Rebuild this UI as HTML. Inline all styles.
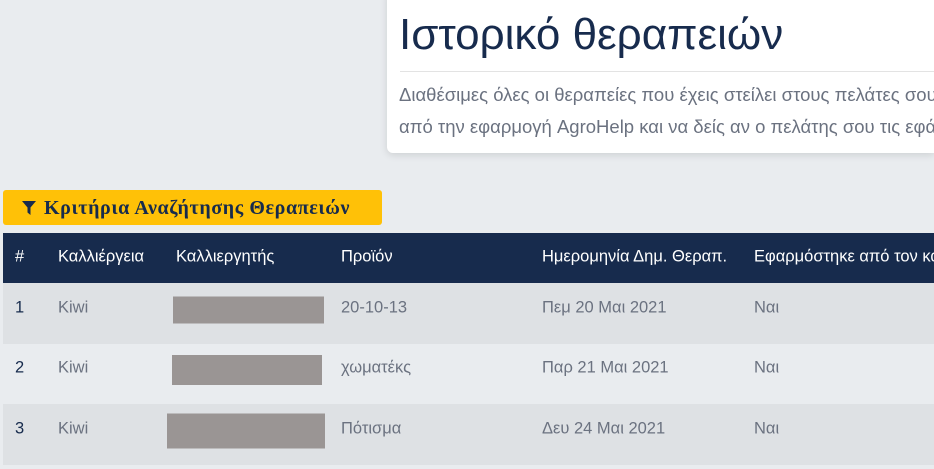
<!DOCTYPE html>
<html><head><meta charset="utf-8"><style>
body{margin:0;width:934px;height:469px;overflow:hidden;background:#e9ecef;font-family:"Liberation Sans","DejaVu Sans",sans-serif;position:relative}
.card{position:absolute;left:387px;top:-10px;width:547px;height:163px;background:#fff;border-radius:6px 0 0 6px;box-shadow:0 2px 8px rgba(0,0,0,.12);overflow:hidden}
h1{position:absolute;left:12px;top:20px;margin:0;font-weight:400;font-size:44px;color:#172b4d;white-space:nowrap}
.hr{position:absolute;left:13px;right:0;top:81px;height:1px;background:#e3e3e3}
.p{position:absolute;left:12px;top:89px;font-size:18.5px;line-height:32px;color:#6b7280;white-space:nowrap}
.btn{position:absolute;left:3px;top:190px;width:379px;height:35px;background:#ffc107;border-radius:3px;font-family:"Liberation Serif",serif;font-weight:bold;font-size:20px;letter-spacing:0.6px;color:#172b4d;line-height:37px;white-space:nowrap}
.btn svg{position:absolute;left:19px;top:11px}
.btn span{position:absolute;left:41px}
.row{position:absolute;left:3px;width:931px;font-size:16.5px;color:#6b7280;overflow:hidden}
.row div{position:absolute;white-space:nowrap}
.row div{top:calc(50% - 6px);transform:translateY(-50%)}
.h{top:233px;height:50px;background:#172b4d;color:#fff}
.h div{top:calc(50% - 1px)}
.a{background:#dee1e4}.b{background:#e9ecef}
.c0{left:12px;color:#172b4d}.h .c0{color:#fff}
.c1{left:55px}.c2{left:173px}.c3{left:338px}.c4{left:539px}.c5{left:751px}
.row .r{height:27px;background:#9a9594;top:calc(50% - 4px)}
</style></head><body>
<div class="card"><h1>Ιστορικό θεραπειών</h1><div class="hr"></div>
<div class="p">Διαθέσιμες όλες οι θεραπείες που έχεις στείλει στους πελάτες σου<br>από την εφαρμογή AgroHelp και να δείς αν ο πελάτης σου τις εφάρμοσε</div></div>
<div class="btn"><svg width="14" height="14" viewBox="0 0 14 14"><path d="M0 0H14L8.5 6.5V14L5.5 11.5V6.5Z" fill="#172b4d"/></svg><span>Κριτήρια Αναζήτησης Θεραπειών</span></div>
<div class="row h"><div class="c0">#</div><div class="c1">Καλλιέργεια</div><div class="c2">Καλλιεργητής</div><div class="c3">Προϊόν</div><div class="c4">Ημερομηνία Δημ. Θεραπ.</div><div class="c5">Εφαρμόστηκε από τον καλλιεργητή</div></div>
<div class="row a" style="top:283px;height:61px"><div class="c0">1</div><div class="c1">Kiwi</div><div class="c2 r" style="left:170px;width:151px"></div><div class="c3">20-10-13</div><div class="c4">Πεμ 20 Μαι 2021</div><div class="c5">Ναι</div></div>
<div class="row b" style="top:344px;height:60px"><div class="c0">2</div><div class="c1">Kiwi</div><div class="c2 r" style="left:169px;width:150px;height:30px"></div><div class="c3">χωματέκς</div><div class="c4">Παρ 21 Μαι 2021</div><div class="c5">Ναι</div></div>
<div class="row a" style="top:404px;height:61px"><div class="c0">3</div><div class="c1">Kiwi</div><div class="c2 r" style="left:164px;width:158px;height:35px"></div><div class="c3">Πότισμα</div><div class="c4">Δευ 24 Μαι 2021</div><div class="c5">Ναι</div></div>
</body></html>
